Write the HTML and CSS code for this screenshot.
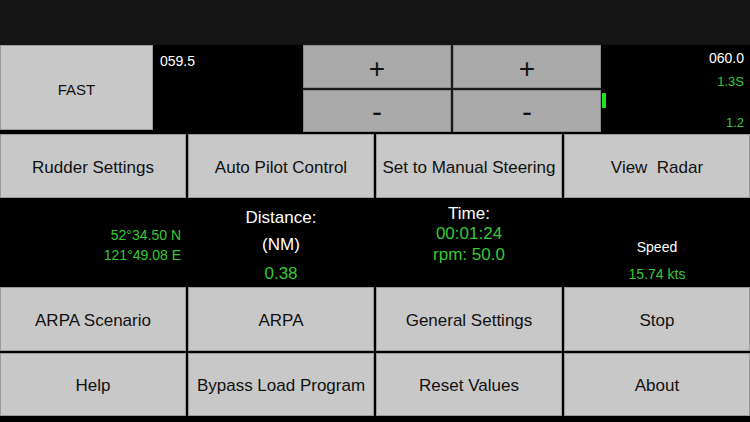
FILE: index.html
```html
<!DOCTYPE html>
<html>
<head>
<meta charset="utf-8">
<link rel="stylesheet" href="styles.css">
</head>
<body>
<div class="screen">
  <div class="statusbar"></div>
  <div class="top">
    <div class="btn fast">FAST</div>
    <div class="readout"><div class="white14">059.5</div></div>
    <div class="steer">
      <div class="sbtn">+</div>
      <div class="sbtn">+</div>
      <div class="sbtn minus">-</div>
      <div class="sbtn minus">-</div>
    </div>
    <div class="gauge">
      <div class="bar"></div>
      <div class="vals">
        <div class="white14 v1">060.0</div>
        <div class="green13 v2">1.3S</div>
        <div class="green13 v3">1.2</div>
      </div>
    </div>
  </div>
  <div class="grid row1">
    <div class="btn">Rudder Settings</div>
    <div class="btn">Auto Pilot Control</div>
    <div class="btn">Set to Manual Steering</div>
    <div class="btn">View&nbsp; Radar</div>
  </div>
  <div class="grid info">
    <div class="col pos">
      <div class="g14">52°34.50 N</div>
      <div class="g14">121°49.08 E</div>
    </div>
    <div class="col dist">
      <div class="w17">Distance:</div>
      <div class="w17 nm">(NM)</div>
      <div class="g17 dv">0.38</div>
    </div>
    <div class="col time">
      <div class="w17">Time:</div>
      <div class="g17">00:01:24</div>
      <div class="g17">rpm: 50.0</div>
    </div>
    <div class="col speed">
      <div class="w14">Speed</div>
      <div class="g14 sv">15.74 kts</div>
    </div>
  </div>
  <div class="grid rows2">
    <div class="btn">ARPA Scenario</div>
    <div class="btn">ARPA</div>
    <div class="btn">General Settings</div>
    <div class="btn">Stop</div>
    <div class="btn">Help</div>
    <div class="btn">Bypass Load Program</div>
    <div class="btn">Reset Values</div>
    <div class="btn">About</div>
  </div>
</div>
</body>
</html>
```
FILE: styles.css
```css
html, body {
  margin: 0;
  padding: 0;
  background: #000;
}
.screen {
  width: 750px;
  height: 422px;
  overflow: hidden;
  background: #000;
  font-family: "Liberation Sans", Arial, sans-serif;
}
.statusbar {
  height: 45px;
  background: #141414;
}
.top {
  display: grid;
  grid-template-columns: 153px 150px 298px 149px;
  height: 89px;
  align-items: start;
}
.btn {
  background: #c8c8c8;
  color: #111;
  font-size: 17px;
  display: flex;
  align-items: center;
  justify-content: center;
  white-space: nowrap;
  padding-top: 3px;
  box-sizing: border-box;
  box-shadow: inset 0 0 0 1px #9a9a9a;
}
.fast {
  height: 85px;
  font-size: 15px;
  padding-top: 3px;
}
.readout {
  padding: 8px 0 0 7px;
}
.white14 {
  color: #fff;
  font-size: 14px;
  line-height: 16px;
}
.green13 {
  color: #35c935;
  font-size: 13px;
  line-height: 15px;
}
.steer {
  display: grid;
  grid-template-columns: 148px 148px;
  grid-template-rows: 43px 42px;
  gap: 2px;
  height: 87px;
  background: #1a1a1a;
}
.sbtn {
  background: #aaaaaa;
  color: #111;
  font-size: 28px;
  display: flex;
  align-items: center;
  justify-content: center;
  padding-top: 4px;
  box-sizing: border-box;
  box-shadow: inset 0 0 0 1px #8a8a8a;
}
.sbtn.minus {
  font-size: 30px;
  padding-top: 1px;
}
.gauge {
  display: flex;
  height: 89px;
}
.bar {
  width: 4px;
  height: 15px;
  margin: 48px 0 0 1px;
  background: #1ee61e;
  border-radius: 1px;
}
.vals {
  flex: 1;
  display: flex;
  flex-direction: column;
  align-items: flex-end;
  padding: 5px 6px 0 0;
}
.v2 { margin-top: 8px; }
.v3 { margin-top: 26px; }
.grid {
  display: grid;
  grid-template-columns: repeat(4, 186px);
  column-gap: 2px;
}
.row1 {
  grid-template-rows: 64px;
}
.info {
  height: 89px;
}
.col {
  display: flex;
  flex-direction: column;
  align-items: center;
}
.w17 { color: #fff; font-size: 17px; line-height: 20px; }
.g17 { color: #35c935; font-size: 17px; line-height: 20px; }
.w14 { color: #fff; font-size: 14px; line-height: 18px; }
.g14 { color: #35c935; font-size: 14px; line-height: 20px; }
.pos {
  align-items: flex-end;
  padding: 27px 5px 0 0;
}
.dist { padding-top: 10px; }
.nm { margin-top: 7px; }
.dv { margin-top: 9px; }
.time { padding-top: 6px; }
.time .g17 + .g17 { margin-top: 1px; }
.speed { padding-top: 40px; }
.sv { margin-top: 9px; line-height: 18px; }
.rows2 {
  grid-template-rows: 64px 63px;
  row-gap: 2px;
}
```
